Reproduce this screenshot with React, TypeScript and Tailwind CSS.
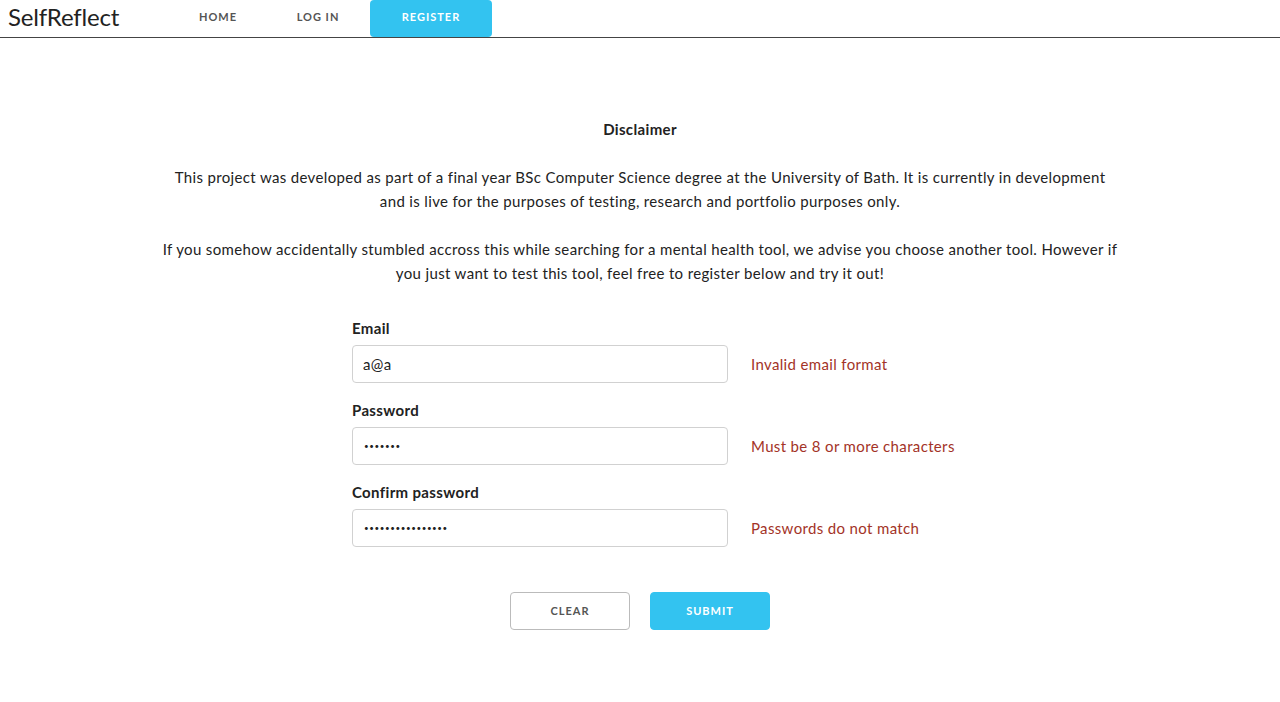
import React from "react";

export default function App() {
  const font = { fontFamily: "Lato, 'Open Sans', sans-serif" };
  return (
    <div className="min-h-[702px] bg-white text-[#222] text-[15px] leading-[24px] tracking-[0.35px]" style={font}>
      <nav className="flex items-stretch h-[38px] border-b border-[#444]">
        <div className="pl-[8px] w-[168px] text-[24px] leading-[34px] text-[#222] tracking-[-0.2px]">SelfReflect</div>
        <a className="w-[100px] pb-[3px] flex items-center justify-center text-[11px] font-bold tracking-[1px] text-[#555]">HOME</a>
        <a className="w-[100px] pb-[3px] flex items-center justify-center text-[11px] font-bold tracking-[1px] text-[#555]">LOG IN</a>
        <a className="ml-[2px] w-[122px] h-[37px] pb-[3px] flex items-center justify-center text-[11px] font-bold tracking-[1px] text-white bg-[#33c3f0] rounded-[4px]">REGISTER</a>
      </nav>
      <div className="flex flex-col items-center pt-[79px]">
        <div className="font-bold">Disclaimer</div>
        <p className="mt-[24px] text-center w-[1000px]">
          This project was developed as part of a final year BSc Computer Science degree at the University of Bath. It is currently in development<br />
          and is live for the purposes of testing, research and portfolio purposes only.
        </p>
        <p className="mt-[24px] text-center w-[1000px]">
          If you somehow accidentally stumbled accross this while searching for a mental health tool, we advise you choose another tool. However if<br />
          you just want to test this tool, feel free to register below and try it out!
        </p>
        <form className="mt-[31px] w-[576px] flex flex-col">
          {[
            { label: "Email", value: "a@a", type: "text", err: "Invalid email format" },
            { label: "Password", value: "•••••••", type: "pw", err: "Must be 8 or more characters" },
            { label: "Confirm password", value: "••••••••••••••••", type: "pw", err: "Passwords do not match" },
          ].map((f, i) => (
            <div key={i} className="flex flex-col mb-[15px]">
              <label className="font-bold mb-[5px]">{f.label}</label>
              <div className="flex items-center">
                <div className="w-[376px] shrink-0 h-[38px] border border-[#d1d1d1] rounded-[4px] px-[10px] flex items-center text-[15px]">
                  {f.type === "pw" ? <span className="tracking-[0.6px] text-[8px] pl-[1px]">{f.value}</span> : f.value}
                </div>
                <span className="ml-[23px] whitespace-nowrap text-[#a33327]">{f.err}</span>
              </div>
            </div>
          ))}
        </form>
        <div className="mt-[30px] flex gap-[20px]">
          <button className="w-[120px] h-[38px] border border-[#bbb] rounded-[4px] text-[11px] font-bold tracking-[1px] text-[#555]">CLEAR</button>
          <button className="w-[120px] h-[38px] border border-[#33c3f0] bg-[#33c3f0] rounded-[4px] text-[11px] font-bold tracking-[1px] text-white">SUBMIT</button>
        </div>
      </div>
    </div>
  );
}
